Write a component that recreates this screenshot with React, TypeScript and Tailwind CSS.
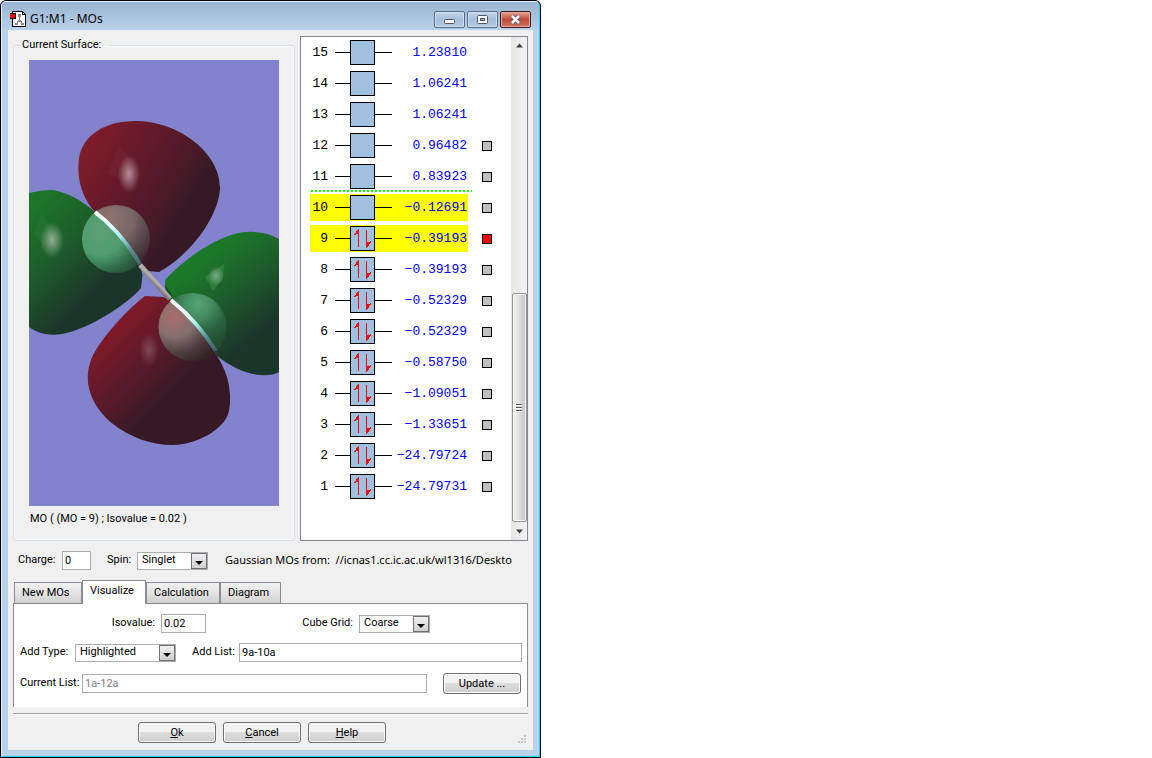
import { useState } from "react";
import type { ReactNode } from "react";

type Orbital = { n: number; energy: string; filled: boolean; surface: boolean };

const energies = [
  "1.23810", "1.06241", "1.06241", "0.96482", "0.83923",
  "-0.12691", "-0.39193", "-0.39193", "-0.52329", "-0.52329",
  "-0.58750", "-1.09051", "-1.33651", "-24.79724", "-24.79731",
];

const orbitals: Orbital[] = energies.map((energy, i) => {
  const n = 15 - i;
  return { n, energy: energy.replace("-", "−"), filled: n <= 9, surface: n <= 12 };
});

function AppIcon() {
  return (
    <svg className="h-4 w-4" viewBox="0 0 16 16" shapeRendering="crispEdges" aria-hidden="true">
      <path d="M2 0h11v1h1v1h1v1h1v13H2z" fill="#000" />
      <path d="M3 1h9v3h3v11H3z" fill="#fff" />
      <path d="M13 2h1v1h-1z" fill="#f8f8f8" />
      <path d="M8 3h3v3H8zM9 6h1v4H9zM8 9h3v2H8zM7 10h1v2H7zM11 10h1v2h-1zM5 12h3v2H5zM11 12h3v2h-3z" fill="#8a8a8a" />
      <path d="M0 2h6v6H0z" fill="#000" />
      <path d="M0 3h5v4H0z" fill="#f00" />
    </svg>
  );
}

function TitleButtons() {
  const plain =
    "flex h-[17px] w-[31px] items-center justify-center rounded-[2px] border border-[#536b8b] bg-linear-to-b from-[#c3d6ea] via-[#a5bed9] to-[#b3cbe4] shadow-[inset_0_0_0_1px_#d3e2f1]";
  return (
    <div className="flex gap-[2px]">
      <button aria-label="Minimize" className={`${plain} pt-1`}>
        <svg width="11" height="5" viewBox="0 0 11 5" aria-hidden="true">
          <rect x="0.5" y="0.5" width="10" height="4" rx="1" fill="#fff" stroke="#535666" />
        </svg>
      </button>
      <button aria-label="Maximize" className={plain}>
        <svg width="11" height="9" viewBox="0 0 11 9" aria-hidden="true">
          <rect x="0.5" y="0.5" width="10" height="8" rx="1" fill="#fff" stroke="#535666" />
          <rect x="3.5" y="3.5" width="4" height="2" fill="#8fa9c6" stroke="#535666" />
        </svg>
      </button>
      <button
        aria-label="Close"
        className="flex h-[17px] w-[31px] items-center justify-center rounded-[2px] border border-[#431422] bg-linear-to-b from-[#e0a596] via-[#c04a35] to-[#cf7460] shadow-[inset_0_0_0_1px_#e3a99c]"
      >
        <svg width="13" height="11" viewBox="0 0 13 11" aria-hidden="true">
          <path d="M3 2l7 7M10 2l-7 7" stroke="#535666" strokeWidth="4.4" />
          <path d="M3 2l7 7M10 2l-7 7" stroke="#fff" strokeWidth="2.6" />
        </svg>
      </button>
    </div>
  );
}

function SurfaceView() {
  return (
    <svg className="block h-[446px] w-full bg-[#8282cd]" viewBox="29 60 250 446" preserveAspectRatio="xMidYMid slice" aria-hidden="true">
      <defs>
        <linearGradient id="redTop" gradientUnits="userSpaceOnUse" x1="90" y1="140" x2="190" y2="200">
          <stop offset="0" stopColor="#7f1c2a" />
          <stop offset="0.5" stopColor="#5f1a29" />
          <stop offset="0.85" stopColor="#461a27" />
          <stop offset="1" stopColor="#371926" />
        </linearGradient>
        <linearGradient id="redLow" gradientUnits="userSpaceOnUse" x1="110" y1="335" x2="170" y2="395">
          <stop offset="0" stopColor="#7d1a29" />
          <stop offset="0.5" stopColor="#5b1a29" />
          <stop offset="1" stopColor="#371926" />
        </linearGradient>
        <linearGradient id="greenLeft" gradientUnits="userSpaceOnUse" x1="32" y1="210" x2="105" y2="283">
          <stop offset="0" stopColor="#1c7529" />
          <stop offset="0.5" stopColor="#1d5a2a" />
          <stop offset="1" stopColor="#1c352a" />
        </linearGradient>
        <linearGradient id="greenRight" gradientUnits="userSpaceOnUse" x1="205" y1="260" x2="262" y2="332">
          <stop offset="0" stopColor="#1c7829" />
          <stop offset="0.5" stopColor="#1d592b" />
          <stop offset="1" stopColor="#1c352a" />
        </linearGradient>
        <linearGradient id="rodA" gradientUnits="userSpaceOnUse" x1="95" y1="212" x2="140" y2="264">
          <stop offset="0" stopColor="#fff" />
          <stop offset="0.3" stopColor="#e8ffff" />
          <stop offset="0.5" stopColor="#a8f0f0" />
          <stop offset="0.75" stopColor="#5d8d93" />
          <stop offset="1" stopColor="#47686c" />
        </linearGradient>
        <linearGradient id="rodB" gradientUnits="userSpaceOnUse" x1="171" y1="300" x2="216" y2="351">
          <stop offset="0" stopColor="#fff" />
          <stop offset="0.35" stopColor="#e8ffff" />
          <stop offset="0.5" stopColor="#a8f0f0" />
          <stop offset="0.75" stopColor="#5d8d93" />
          <stop offset="1" stopColor="#3f5a5e" />
        </linearGradient>
        <linearGradient id="bond" gradientUnits="userSpaceOnUse" x1="153" y1="284" x2="158" y2="279">
          <stop offset="0" stopColor="#77726f" />
          <stop offset="0.5" stopColor="#b5b2b1" />
          <stop offset="1" stopColor="#a19c9c" />
        </linearGradient>
        <radialGradient id="ballGreenA" gradientUnits="userSpaceOnUse" cx="100" cy="232" r="52">
          <stop offset="0" stopColor="#5a9f74" />
          <stop offset="0.45" stopColor="#4f9c70" />
          <stop offset="0.75" stopColor="#2f6b48" />
          <stop offset="1" stopColor="#24422f" />
        </radialGradient>
        <radialGradient id="ballRedA" gradientUnits="userSpaceOnUse" cx="110" cy="218" r="52">
          <stop offset="0" stopColor="#8d7470" />
          <stop offset="0.45" stopColor="#7a6664" />
          <stop offset="0.75" stopColor="#544547" />
          <stop offset="1" stopColor="#3d2a31" />
        </radialGradient>
        <radialGradient id="ballRedB" gradientUnits="userSpaceOnUse" cx="174" cy="317" r="50">
          <stop offset="0" stopColor="#a86d6d" />
          <stop offset="0.4" stopColor="#85706d" />
          <stop offset="0.75" stopColor="#4b3c3d" />
          <stop offset="1" stopColor="#322325" />
        </radialGradient>
        <radialGradient id="ballGreenB" gradientUnits="userSpaceOnUse" cx="198" cy="304" r="44">
          <stop offset="0" stopColor="#53a674" />
          <stop offset="0.3" stopColor="#468d61" />
          <stop offset="0.65" stopColor="#2a6140" />
          <stop offset="1" stopColor="#214d2e" />
        </radialGradient>
        <radialGradient id="glint">
          <stop offset="0" stopColor="#fff" stopOpacity="0.5" />
          <stop offset="0.5" stopColor="#fff" stopOpacity="0.25" />
          <stop offset="1" stopColor="#fff" stopOpacity="0" />
        </radialGradient>
        <clipPath id="lowerA"><path d="M60 180L95 212Q122 233 140 264L160 300H60z" /></clipPath>
        <clipPath id="upperA"><path d="M60 180L95 212Q122 233 140 264L160 300H180V180z" /></clipPath>
        <clipPath id="lowerB"><path d="M140 270L171 300Q198 322 216 351L230 380H140z" /></clipPath>
        <clipPath id="upperB"><path d="M140 270L171 300Q198 322 216 351L230 380H250V270z" /></clipPath>
      </defs>
      <path d="M95 212C84 200 76 182 79 158C83 135 105 121 135 121C180 121 221 154 220 189C218 218 190 255 159 272L147 271L140 264Q122 233 95 212z" fill="url(#redTop)" />
      <path d="M29 193Q40 190 52 190C68 192 84 202 95 212Q122 233 140 264L142.500 275L141 288C130 302 90 329 62 334Q42 337 29 327z" fill="url(#greenLeft)" />
      <path d="M165 280C185 258 212 240 238 233Q262 229 279 239V372Q272 376 260 375C245 374 230 366 217 356Q198 322 171 300L166 296z" fill="url(#greenRight)" />
      <path d="M171 300L163 297L145 296C125 311 95 345 90 363C83 385 93 408 113 424C130 437 150 445 173 445C195 445 225 430 229 411Q232 395 227 377Q223 365 217 356Q198 322 171 300z" fill="url(#redLow)" />
      <path d="M119 147L132 160L126 181L107 174z" fill="#a05060" opacity="0.1" />
      <path d="M165 284L174 298L166 296z" fill="#174f27" />
      <ellipse cx="129" cy="174" rx="11" ry="19" fill="url(#glint)" />
      <ellipse cx="52" cy="240" rx="12" ry="18" fill="url(#glint)" />
      <path d="M42 214L52 230L44 246L33 233z" fill="#8dc49a" opacity="0.06" />
      <path d="M224 264L223 278L213 291L205 277z" fill="#62bd76" opacity="0.25" />
      <ellipse cx="216" cy="276" rx="8" ry="10" fill="url(#glint)" opacity="0.7" />
      <ellipse cx="149" cy="350" rx="10" ry="17" fill="url(#glint)" opacity="0.4" />
      <circle cx="116" cy="239" r="34" fill="url(#ballGreenA)" clipPath="url(#lowerA)" />
      <circle cx="116" cy="239" r="34" fill="url(#ballRedA)" clipPath="url(#upperA)" />
      <circle cx="192.500" cy="327" r="34" fill="url(#ballRedB)" clipPath="url(#lowerB)" />
      <circle cx="192.500" cy="327" r="34" fill="url(#ballGreenB)" clipPath="url(#upperB)" />
      <path d="M140 265L170 299" stroke="url(#bond)" strokeWidth="5" />
      <path d="M95 212Q121 232 140 264" fill="none" stroke="url(#rodA)" strokeWidth="4" />
      <path d="M171 300Q197 321 216 351" fill="none" stroke="url(#rodB)" strokeWidth="4" />
    </svg>
  );
}

function Occupation({ filled }: { filled: boolean }) {
  return (
    <span className="flex h-[25px] w-[25px] items-center justify-center border border-black bg-[#a1bfdf]">
      {filled && (
        <svg width="17" height="19" viewBox="0 0 17 19" shapeRendering="crispEdges" aria-hidden="true">
          <path d="M4 0h1v18H4zM3 1h1v4H3zM2 2h1v3H2zM1 4h1v2H1zM0 5h1v1H0z" fill="#f00" />
          <path d="M12 1h1v18h-1zM13 13h1v5h-1zM14 13h1v4h-1zM15 13h1v2h-1zM16 12h1v2h-1z" fill="#f00" />
        </svg>
      )}
    </span>
  );
}

function OrbitalRow({ orbital, highlighted, onToggle }: { orbital: Orbital; highlighted: boolean; onToggle: () => void }) {
  return (
    <li className="relative flex h-[31px] items-center pl-[9px]">
      <button
        onClick={onToggle}
        className={`flex h-[27px] w-[158px] items-center ${highlighted ? "bg-[#ff0]" : ""}`}
      >
        <span className="w-[18px] text-right text-black">{orbital.n}</span>
        <span className="ml-[7px] h-px w-[15px] bg-black" />
        <Occupation filled={orbital.filled} />
        <span className="h-px w-[17px] bg-black" />
        <span className="flex-1 pr-px text-right text-[#00f]">{orbital.energy}</span>
      </button>
      {orbital.surface && (
        <input
          type="checkbox"
          aria-label={`Surface ${orbital.n}`}
          defaultChecked={orbital.n === 9}
          className="ml-[14px] h-[10px] w-[10px] appearance-none border border-black bg-[#c0c0c0] checked:bg-[#f00]"
        />
      )}
      {orbital.n === 11 && (
        <span className="absolute bottom-0 left-[10px] h-[2px] w-[161px] bg-[repeating-linear-gradient(90deg,#00ff00_0px,#00ff00_2px,transparent_2px,transparent_4px)]" />
      )}
    </li>
  );
}

function ScrollBar() {
  return (
    <div className="flex w-4 flex-col items-center bg-linear-to-r from-[#e6e6e6] to-[#f3f3f3]">
      <svg className="my-[5px]" width="7" height="7" viewBox="0 0 7 7" aria-hidden="true">
        <path d="M0 5.500L3.500 1.500L7 5.500z" fill="#404040" />
      </svg>
      <div className="flex-1" />
      <div className="flex h-[229px] w-[15px] flex-col items-center justify-center gap-px rounded-[2px] border border-[#959595] bg-linear-to-r from-[#f5f5f5] via-[#dedede] to-[#c2c2c4] shadow-[inset_0_0_0_1px_#f8f8f8]">
        {[0, 1, 2].map((i) => (
          <span key={i} className="h-[2px] w-[6px] border-t border-[#555] bg-white" />
        ))}
      </div>
      <svg className="mt-[7px] mb-[6px]" width="7" height="5" viewBox="0 0 7 5" aria-hidden="true">
        <path d="M0 0.500L3.500 4.500L7 0.500z" fill="#404040" />
      </svg>
    </div>
  );
}

function Select({ id, value, className }: { id: string; value: string; className: string }) {
  return (
    <span className={`relative flex h-[18px] shrink-0 border border-[#abadb3] bg-white ${className}`}>
      <select id={id} className="w-full appearance-none bg-white pb-[2px] pl-1 leading-[14px] outline-none">
        <option>{value}</option>
      </select>
      <span className="pointer-events-none absolute top-0 right-0 flex h-4 w-4 items-center justify-center border border-[#707070] bg-linear-to-b from-[#f2f2f2] to-[#cfcfcf] pt-1">
        <svg width="8" height="4" viewBox="0 0 8 4" aria-hidden="true">
          <path d="M0 0h8L4 4z" fill="#000" />
        </svg>
      </span>
    </span>
  );
}

function PushButton({ children }: { children: ReactNode }) {
  return (
    <button className="h-[21px] w-[78px] rounded-[3px] border border-[#707070] bg-linear-to-b from-[#f2f2f2] from-50% via-[#dddddd] via-50% to-[#cfcfcf] leading-[17px] shadow-[inset_0_0_0_1px_#fbfbfb]">
      {children}
    </button>
  );
}

const tabs = [
  { name: "New MOs", size: "w-[68px]" },
  { name: "Visualize", size: "w-[64px]" },
  { name: "Calculation", size: "w-[74px]" },
  { name: "Diagram", size: "w-[61px]" },
];

const field = "h-[19px] border border-[#abadb3] bg-white px-[2px] outline-none";

export default function App() {
  const [selected, setSelected] = useState<number[]>([9, 10]);
  const [tab, setTab] = useState("Visualize");
  const toggle = (n: number) =>
    setSelected((s) => (s.includes(n) ? s.filter((v) => v !== n) : [...s, n]));

  return (
    <div className="min-h-screen bg-white font-['Roboto',sans-serif] text-[11px] text-black">
      <main className="w-full max-w-[541px] rounded-t-[6px] border border-black bg-black">
        <div className="rounded-t-[5px] border-t border-r border-b border-l border-t-[#e8f1fa] border-r-[#27d5f2] border-b-[#27d5f2] border-l-[#e4eef8] bg-[#b9d1ea] px-[6px] pb-[6px]">
          <header className="-mx-[6px] flex h-7 items-center rounded-t-[4px] bg-linear-to-b from-[#99b4d1] to-[#b9d1ea] px-2 pt-[6px]">
            <AppIcon />
            <h1 className="ml-1 flex-1 font-['Noto_Sans',sans-serif] text-[12px] leading-4">G1:M1 - MOs</h1>
            <TitleButtons />
          </header>

          <div className="bg-[#f0f0f0] px-[5px] pt-[6px] pb-[7px]">
            <div className="flex gap-[5px]">
              <fieldset className="min-w-0 flex-1 rounded-[3px] border border-[#d5dfe5] px-[15px] shadow-[inset_0_0_0_1px_#fafafa]">
                <legend className="-ml-2 w-[88px] pl-px leading-[18px]">Current Surface:</legend>
                <div className="pt-[6px]">
                  <SurfaceView />
                  <p className="pt-1 pl-px leading-[18px]">MO ( (MO = 9) ; Isovalue = 0.02 )</p>
                </div>
              </fieldset>
              <div className="flex h-[505px] w-[228px] justify-between border border-[#828790] bg-white">
                <ul className="font-['Liberation_Mono',monospace] text-[13px] leading-4">
                  {orbitals.map((o) => (
                    <OrbitalRow key={o.n} orbital={o} highlighted={selected.includes(o.n)} onToggle={() => toggle(o.n)} />
                  ))}
                </ul>
                <ScrollBar />
              </div>
            </div>

            <div className="flex h-[39px] items-center pl-[5px]">
              <label htmlFor="charge" className="w-11 shrink-0">Charge:</label>
              <input id="charge" defaultValue="0" className={`${field} w-[29px] shrink-0`} />
              <label htmlFor="spin" className="ml-4 w-[30px] shrink-0">Spin:</label>
              <Select id="spin" value="Singlet" className="w-[71px]" />
              <p className="ml-[17px] font-['Noto_Sans',sans-serif] whitespace-pre">
                Gaussian MOs from:  //icnas1.cc.ic.ac.uk/wl1316/Deskto
              </p>
            </div>

            <div role="tablist" className="flex items-end pl-px">
              {tabs.map((t) => (
                <button
                  key={t.name}
                  role="tab"
                  aria-selected={tab === t.name}
                  onClick={() => setTab(t.name)}
                  className={`${t.size} ${
                    tab === t.name
                      ? "relative -mb-px h-6 border-b-0 bg-white pb-[2px]"
                      : "h-[21px] border-b-0 bg-linear-to-b from-[#f2f2f2] via-[#e4e4e4] to-[#cfcfcf]"
                  } border border-[#898c95] pl-[7px] text-left`}
                >
                  {t.name}
                </button>
              ))}
            </div>
            <section className="flex flex-col gap-[10px] border border-b-0 border-[#898c95] bg-white pt-[10px] pr-[5px] pb-3 pl-[6px]">
              <div className="flex h-[19px] items-center">
                <label htmlFor="isovalue" className="w-[141px] pr-[6px] text-right">Isovalue:</label>
                <input id="isovalue" defaultValue="0.02" className={`${field} w-[45px]`} />
                <label htmlFor="grid" className="ml-auto pr-[6px]">Cube Grid:</label>
                <Select id="grid" value="Coarse" className="mr-[92px] w-[71px]" />
              </div>
              <div className="flex h-[19px] items-center">
                <label htmlFor="type" className="w-[55px]">Add Type:</label>
                <Select id="type" value="Highlighted" className="w-[101px]" />
                <label htmlFor="addlist" className="ml-4 w-[47px]">Add List:</label>
                <input id="addlist" defaultValue="9a-10a" className={`${field} min-w-0 flex-1`} />
              </div>
              <div className="flex h-[23px] items-center pr-px">
                <label htmlFor="current" className="w-[62px] whitespace-nowrap">Current List:</label>
                <input id="current" readOnly value="1a-12a" className={`${field} mr-4 min-w-0 flex-1 text-[#808080]`} />
                <PushButton>Update ...</PushButton>
              </div>
            </section>

            <hr className="mt-[6px] h-[2px] border-t border-b border-t-[#a0a0a0] border-b-white" />
            <footer className="relative mt-[7px] flex justify-center gap-[7px] pr-[17px]">
              <PushButton><u>O</u>k</PushButton>
              <PushButton><u>C</u>ancel</PushButton>
              <PushButton><u>H</u>elp</PushButton>
              <svg className="absolute right-[2px] bottom-0" width="8" height="8" viewBox="0 0 8 8" aria-hidden="true">
                <path d="M6 0h2v2H6zM3 3h2v2H3zM6 3h2v2H6zM0 6h2v2H0zM3 6h2v2H3zM6 6h2v2H6z" fill="#c4c4c4" />
              </svg>
            </footer>
          </div>
        </div>
      </main>
    </div>
  );
}
